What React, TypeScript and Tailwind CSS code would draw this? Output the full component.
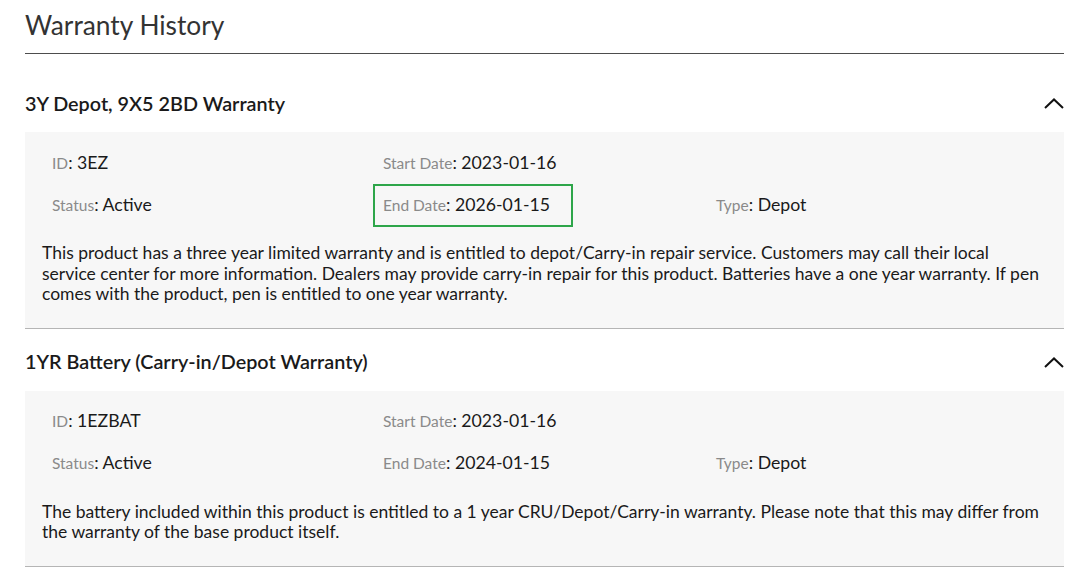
import React from 'react';

type Warranty = {
  name: string;
  id: string;
  status: string;
  start: string;
  end: string;
  type: string;
  description: string;
  highlightEnd?: boolean;
};

const warranties: Warranty[] = [
  {
    name: '3Y Depot, 9X5 2BD Warranty',
    id: '3EZ',
    status: 'Active',
    start: '2023-01-16',
    end: '2026-01-15',
    type: 'Depot',
    description:
      'This product has a three year limited warranty and is entitled to depot/Carry-in repair service. Customers may call their local service center for more information. Dealers may provide carry-in repair for this product. Batteries have a one year warranty. If pen comes with the product, pen is entitled to one year warranty.',
    highlightEnd: true,
  },
  {
    name: '1YR Battery (Carry-in/Depot Warranty)',
    id: '1EZBAT',
    status: 'Active',
    start: '2023-01-16',
    end: '2024-01-15',
    type: 'Depot',
    description:
      'The battery included within this product is entitled to a 1 year CRU/Depot/Carry-in warranty. Please note that this may differ from the warranty of the base product itself.',
  },
];

const Field = ({ label, value }: { label: string; value: string }) => (
  <span className="whitespace-nowrap">
    <span className="text-[15.5px] text-[#8a8a8a]">{label}</span>
    <span className="text-[17.7px] text-[#1a1a1a]">: {value}</span>
  </span>
);

const ChevronUp = () => (
  <svg width="20" height="11" viewBox="0 0 20 11" fill="none" stroke="#111" strokeWidth={2}>
    <polyline points="1,10 10,1.5 19,10" />
  </svg>
);

const WarrantyItem = ({ w }: { w: Warranty }) => (
  <div className="border-b border-[#b5b5b5]">
    <div className="h-[62px] pt-[5px] flex items-center justify-between">
      <h2 className="text-[19.8px] font-semibold text-[#1a1a1a]">{w.name}</h2>
      <ChevronUp />
    </div>
    <div className="bg-[#f7f7f7] pt-[10px] pb-[23px]">
      <div className="grid grid-cols-[331px_333px_1fr] pl-[27px]">
        <div className="h-[42px] flex items-center">
          <Field label="ID" value={w.id} />
        </div>
        <div className="h-[42px] flex items-center">
          <Field label="Start Date" value={w.start} />
        </div>
        <div />
        <div className="h-[42px] flex items-center">
          <Field label="Status" value={w.status} />
        </div>
        <div className="h-[42px] flex items-center">
          {w.highlightEnd ? (
            <div className="-ml-[10px] w-[200px] h-[43px] flex items-center border-2 border-[#2ea64a] pl-2">
              <Field label="End Date" value={w.end} />
            </div>
          ) : (
            <Field label="End Date" value={w.end} />
          )}
        </div>
        <div className="h-[42px] flex items-center">
          <Field label="Type" value={w.type} />
        </div>
      </div>
      <p className="mt-[17px] px-[17px] text-[17.5px] leading-[20.5px] text-[#1a1a1a]">{w.description}</p>
    </div>
  </div>
);

const App: React.FC = () => {
  return (
    <div className="w-[1083px] h-[582px] overflow-hidden bg-white font-['Lato',sans-serif]">
      <div className="ml-[25px] w-[1039px]">
        <div className="h-[54px] border-b border-[#4d4d4d] pt-[7px]">
          <h1 className="text-[26.3px] leading-[36px] text-[#333]">Warranty History</h1>
        </div>
        <div className="mt-[16px]">
          {warranties.map((w) => (
            <WarrantyItem key={w.id} w={w} />
          ))}
        </div>
      </div>
    </div>
  );
};

export default App;
